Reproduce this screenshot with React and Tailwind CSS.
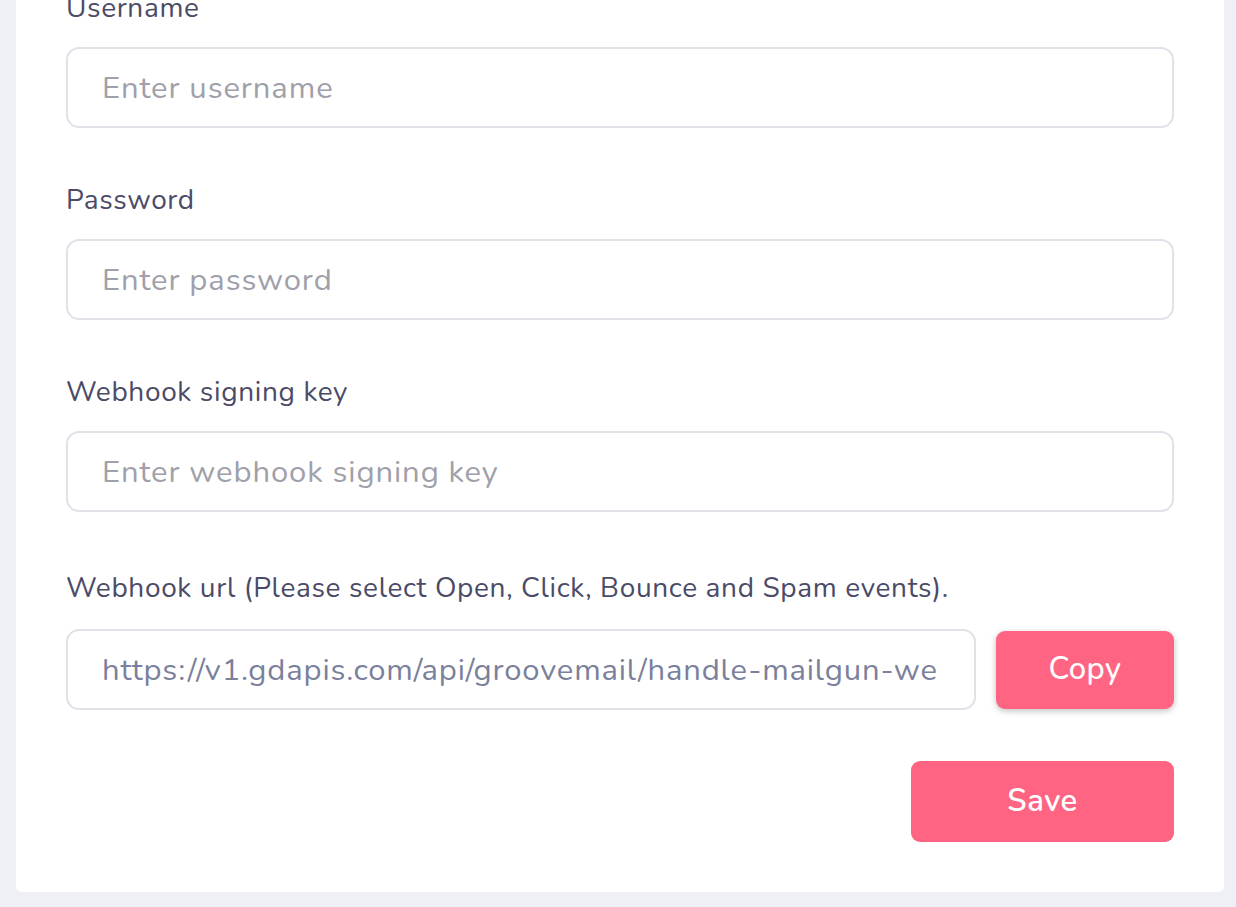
import React from "react";

const font = { fontFamily: '"Nunito", "Open Sans", "Noto Sans", sans-serif' };

function Field({ label, placeholder, className = "" }) {
  return (
    <div className={"flex flex-col gap-[18px] " + className}>
      <label className="text-[28px] leading-[42px] tracking-[0.65px] text-[#4b4b68]">{label}</label>
      <input
        placeholder={placeholder}
        className="h-[81px] w-full rounded-[13px] border-2 border-[#e1e1e9] bg-white px-[34px] text-[31px] tracking-[0.9px] text-[#4b4b68] placeholder:text-[#a0a0aa] outline-none"
      />
    </div>
  );
}

export default function App() {
  return (
    <div className="h-[907px] overflow-hidden bg-[#efeff6] pl-4 pr-3" style={font}>
      <div className="-mt-[63px] flex flex-col gap-[51px] rounded-b-[6px] bg-white px-[50px] pb-[50px] pt-[50px]">
        <Field label="Username" placeholder="Enter username" />
        <Field label="Password" placeholder="Enter password" />
        <Field label="Webhook signing key" placeholder="Enter webhook signing key" />
        <div className="mt-[4px] flex flex-col gap-[20px]">
          <label className="text-[28px] leading-[42px] tracking-[0.65px] text-[#4b4b68]">
            Webhook url (Please select Open, Click, Bounce and Spam events).
          </label>
          <div className="flex items-center gap-[20px]">
            <input
              readOnly
              value="https://v1.gdapis.com/api/groovemail/handle-mailgun-webhook"
              className="h-[81px] min-w-0 flex-1 rounded-[13px] border-2 border-[#e1e1e9] bg-white px-[34px] text-[31px] tracking-[0.85px] text-[#7b809b] outline-none"
            />
            <button className="h-[78px] w-[178px] shrink-0 rounded-[9px] bg-[#ff6583] text-[31px] font-medium tracking-[0.5px] text-white shadow-[0_2px_6px_rgba(0,0,0,0.25)]">
              Copy
            </button>
          </div>
        </div>
        <div className="flex justify-end">
          <button className="h-[81px] w-[263px] rounded-[9px] bg-[#ff6583] text-[31px] font-semibold tracking-[0.5px] text-white">
            Save
          </button>
        </div>
      </div>
    </div>
  );
}
